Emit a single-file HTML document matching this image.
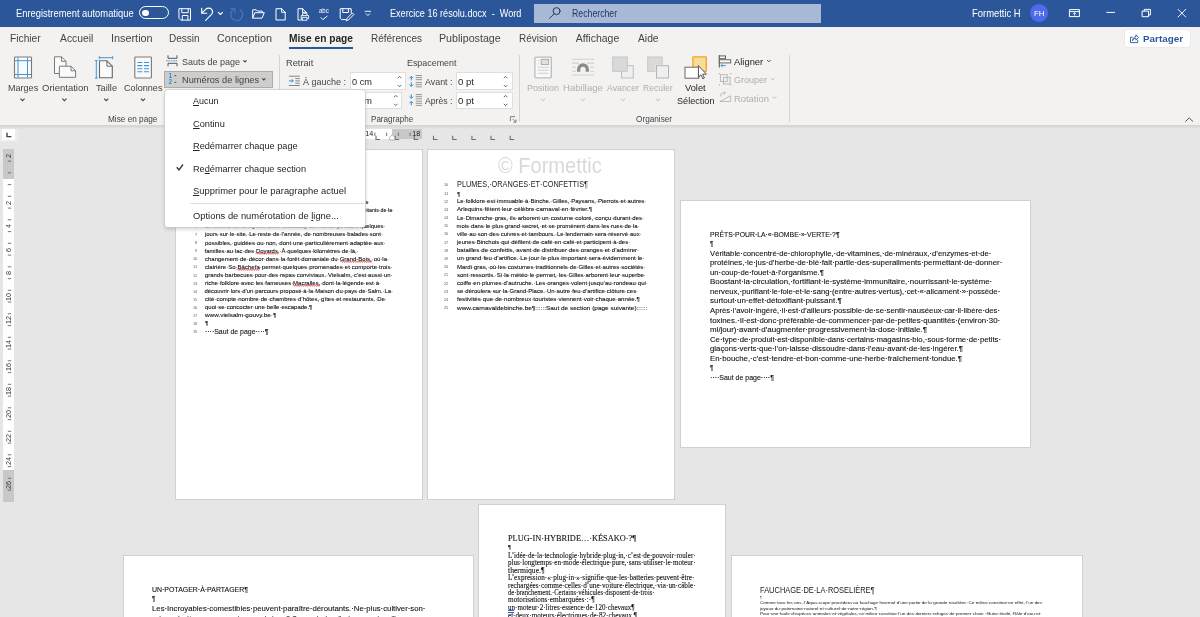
<!DOCTYPE html>
<html lang="fr"><head><meta charset="utf-8"><title>Exercice 16 résolu.docx - Word</title>
<style>
html,body{margin:0;padding:0;}
body{width:1200px;height:617px;overflow:hidden;background:#e6e6e6;font-family:"Liberation Sans",sans-serif;position:relative;}
.t{position:absolute;white-space:pre;line-height:1;transform-origin:0 0;}
.abs{position:absolute;}
#titlebar{left:0;top:0;width:1200px;height:27px;background:#2b579a;}
#tabs{left:0;top:27px;width:1200px;height:25px;background:#f3f2f1;}
#ribbon{left:0;top:52px;width:1200px;height:72.5px;background:#f3f2f1;}
#ribshadow{left:0;top:124.5px;width:1200px;height:4px;background:linear-gradient(#d2d2d2,#e6e6e6);}
.sep{position:absolute;width:1px;background:#d6d4d2;top:55px;height:67px;}
.page{position:absolute;background:#fff;outline:1px solid #d0d0d0;overflow:hidden;}
.inp{position:absolute;background:#fff;border:1px solid #e1dfdd;box-sizing:border-box;}
u{text-decoration:underline;text-underline-offset:0.8px;text-decoration-thickness:0.7px;}
.wv{}
svg{position:absolute;overflow:visible;}
#menu{left:164.6px;top:89.6px;width:200.4px;height:137.6px;background:#fff;border-radius:3px;box-shadow:0 0 0 0.7px #cfcdcb,0 2px 4px rgba(0,0,0,.2);}
</style></head><body>
<div id="docarea" style="will-change:transform">
<!--ICONS_DOC-->
<div class="page" id="p1" style="left:176px;top:149.7px;width:245.6px;height:349px;"><span class="t" style="left:28.5px;top:33.0px;font-size:7.8px;color:#111;transform:scaleX(0.895);-webkit-text-stroke:0.1px #111;">VIELSALM,·SORCIÈRES·ET·MYRTILLES¶</span>
<span class="t" style="left:18.9px;top:35.9px;font-size:3.6px;color:#555;transform:scaleX(1.050);">1</span>
<span class="t" style="left:28.5px;top:42.4px;font-size:5.9px;color:#111;transform:scaleX(1.103);-webkit-text-stroke:0.1px #111;">¶</span>
<span class="t" style="left:18.9px;top:44.1px;font-size:3.6px;color:#555;transform:scaleX(1.050);">2</span>
<span class="t" style="left:28.5px;top:50.6px;font-size:5.9px;color:#111;transform:scaleX(0.746);-webkit-text-stroke:0.1px #111;">Chaque·année,·le·20·juillet,·Vielsalm·fête·les·myrtilles·et·le·sabbat·des·Macralles·a·</span>
<span class="t" style="left:18.9px;top:52.1px;font-size:3.6px;color:#555;transform:scaleX(1.050);">3</span>
<span class="t" style="left:28.5px;top:58.6px;font-size:5.9px;color:#111;transform:scaleX(0.882);-webkit-text-stroke:0.1px #111;">lieu·la·veille·au·soir.·Des·milliers·de·visiteurs·se·mêlent·alors·aux·habitants·de·la·</span>
<span class="t" style="left:18.9px;top:60.2px;font-size:3.6px;color:#555;transform:scaleX(1.050);">4</span>
<span class="t" style="left:28.5px;top:66.7px;font-size:5.9px;color:#111;transform:scaleX(0.729);-webkit-text-stroke:0.1px #111;">commune·pour·assister·au·spectacle·en·wallon·puis·au·cortège.¶</span>
<span class="t" style="left:18.9px;top:68.2px;font-size:3.6px;color:#555;transform:scaleX(1.050);">5</span>
<span class="t" style="left:28.5px;top:74.8px;font-size:5.9px;color:#111;transform:scaleX(0.974);-webkit-text-stroke:0.1px #111;">Le·festival·de·la·myrtille·attire·beaucoup·de·monde·pendant·quelques·</span>
<span class="t" style="left:18.9px;top:76.3px;font-size:3.6px;color:#555;transform:scaleX(1.050);">6</span>
<span class="t" style="left:28.5px;top:82.8px;font-size:5.9px;color:#111;transform:scaleX(1.003);-webkit-text-stroke:0.1px #111;">jours·sur·le·site.·Le·reste·de·l’année,·de·nombreuses·balades·sont·</span>
<span class="t" style="left:18.9px;top:84.4px;font-size:3.6px;color:#555;transform:scaleX(1.050);">7</span>
<span class="t" style="left:28.5px;top:91.0px;font-size:5.9px;color:#111;transform:scaleX(1.023);-webkit-text-stroke:0.1px #111;">possibles,·guidées·ou·non,·dont·une·particulièrement·adaptée·aux·</span>
<span class="t" style="left:18.9px;top:92.5px;font-size:3.6px;color:#555;transform:scaleX(1.050);">8</span>
<span class="t" style="left:28.5px;top:99.0px;font-size:5.9px;color:#111;-webkit-text-stroke:0.1px #111;">familles·au·lac·des·<span class="wv">Doyards</span>.·À·quelques·kilomètres·de·là,·</span>
<span class="t" style="left:18.9px;top:100.6px;font-size:3.6px;color:#555;transform:scaleX(1.050);">9</span>
<span class="t" style="left:28.5px;top:107.1px;font-size:5.9px;color:#111;transform:scaleX(1.018);-webkit-text-stroke:0.1px #111;">changement·de·décor·dans·la·forêt·domaniale·du·<span class="wv">Grand-Bois</span>,·où·la·</span>
<span class="t" style="left:16.8px;top:108.6px;font-size:3.6px;color:#555;transform:scaleX(1.050);">10</span>
<span class="t" style="left:28.5px;top:115.2px;font-size:5.9px;color:#111;transform:scaleX(1.026);-webkit-text-stroke:0.1px #111;">clairière·So·<span class="wv">Bâchefa</span>·permet·quelques·promenades·et·comporte·trois·</span>
<span class="t" style="left:16.8px;top:116.7px;font-size:3.6px;color:#555;transform:scaleX(1.125);">11</span>
<span class="t" style="left:28.5px;top:123.2px;font-size:5.9px;color:#111;transform:scaleX(1.005);-webkit-text-stroke:0.1px #111;">grands·barbecues·pour·des·repas·conviviaux.·Vielsalm,·c’est·aussi·un·</span>
<span class="t" style="left:16.8px;top:124.9px;font-size:3.6px;color:#555;transform:scaleX(1.050);">12</span>
<span class="t" style="left:28.5px;top:131.4px;font-size:5.9px;color:#111;transform:scaleX(1.012);-webkit-text-stroke:0.1px #111;">riche·folklore·avec·les·fameuses·<span class="wv">Macralles</span>,·dont·la·légende·est·à·</span>
<span class="t" style="left:16.8px;top:132.9px;font-size:3.6px;color:#555;transform:scaleX(1.050);">13</span>
<span class="t" style="left:28.5px;top:139.4px;font-size:5.9px;color:#111;-webkit-text-stroke:0.1px #111;">découvrir·lors·d’un·parcours·proposé·à·la·Maison·du·pays·de·Salm.·La·</span>
<span class="t" style="left:16.8px;top:141.0px;font-size:3.6px;color:#555;transform:scaleX(1.050);">14</span>
<span class="t" style="left:28.5px;top:147.5px;font-size:5.9px;color:#111;transform:scaleX(1.025);-webkit-text-stroke:0.1px #111;">cité·compte·nombre·de·chambres·d’hôtes,·gîtes·et·restaurants.·De·</span>
<span class="t" style="left:16.8px;top:149.0px;font-size:3.6px;color:#555;transform:scaleX(1.050);">15</span>
<span class="t" style="left:28.5px;top:155.6px;font-size:5.9px;color:#111;transform:scaleX(1.019);-webkit-text-stroke:0.1px #111;">quoi·se·concocter·une·belle·escapade.¶</span>
<span class="t" style="left:16.8px;top:157.1px;font-size:3.6px;color:#555;transform:scaleX(1.050);">16</span>
<span class="t" style="left:28.5px;top:163.6px;font-size:5.9px;color:#111;transform:scaleX(1.082);-webkit-text-stroke:0.1px #111;">www.vielsalm-gouvy.be·¶</span>
<span class="t" style="left:16.8px;top:165.2px;font-size:3.6px;color:#555;transform:scaleX(1.050);">17</span>
<span class="t" style="left:28.5px;top:171.8px;font-size:5.9px;color:#111;transform:scaleX(1.103);-webkit-text-stroke:0.1px #111;">¶</span>
<span class="t" style="left:16.8px;top:173.3px;font-size:3.6px;color:#555;transform:scaleX(1.050);">18</span>
<span class="t" style="left:28.5px;top:178.3px;font-size:7.2px;color:#111;transform:scaleX(0.965);-webkit-text-stroke:0.1px #111;">····Saut de page····¶</span>
<span class="t" style="left:16.8px;top:181.4px;font-size:3.6px;color:#555;transform:scaleX(1.050);">19</span><svg style="left:0;top:0;" width="246" height="349" fill="none" stroke="#e23b3b" stroke-width="0.7"><path d="M79.5 103.5L80.6 102.7L81.7 104.3L82.8 102.7L83.9 104.3L85.0 102.7L86.1 104.3L87.2 102.7L88.3 104.3L89.4 102.7L90.5 104.3L91.6 102.7L92.7 104.3L93.8 102.7L94.9 104.3L96.0 102.7L97.1 104.3L98.2 102.7L99.3 104.3L100.4 102.7L101.5 104.3L102.6 102.7 M164.3 111.7L165.4 110.9L166.5 112.5L167.6 110.9L168.7 112.5L169.8 110.9L170.9 112.5L172.0 110.9L173.1 112.5L174.2 110.9L175.3 112.5L176.4 110.9L177.5 112.5L178.6 110.9L179.7 112.5L180.8 110.9L181.9 112.5L183.0 110.9L184.1 112.5L185.2 110.9L186.3 112.5L187.4 110.9L188.5 112.5L189.6 110.9L190.7 112.5L191.8 110.9L192.9 112.5L194.0 110.9L195.1 112.5L196.2 110.9 M60.6 119.7L61.7 118.9L62.8 120.5L63.9 118.9L65.0 120.5L66.1 118.9L67.2 120.5L68.3 118.9L69.4 120.5L70.5 118.9L71.6 120.5L72.7 118.9L73.8 120.5L74.9 118.9L76.0 120.5L77.1 118.9L78.2 120.5L79.3 118.9L80.4 120.5L81.5 118.9L82.6 120.5L83.7 118.9 M116.6 135.6L117.7 134.8L118.8 136.4L119.9 134.8L121.0 136.4L122.1 134.8L123.2 136.4L124.3 134.8L125.4 136.4L126.5 134.8L127.6 136.4L128.7 134.8L129.8 136.4L130.9 134.8L132.0 136.4L133.1 134.8L134.2 136.4L135.3 134.8L136.4 136.4L137.5 134.8L138.6 136.4L139.7 134.8L140.8 136.4L141.9 134.8L143.0 136.4L144.1 134.8"/></svg></div>
<div class="page" id="p2" style="left:428px;top:149.7px;width:245.9px;height:349px;"><span class="t" style="left:69.8px;top:6.2px;font-size:21.5px;color:#d9d9d9;transform:scaleX(0.931);">© Formettic</span>
<span class="t" style="left:28.6px;top:31.2px;font-size:8.2px;color:#222;transform:scaleX(0.895);">PLUMES,·ORANGES·ET·CONFETTIS¶</span>
<span class="t" style="left:16.3px;top:34.1px;font-size:3.6px;color:#555;transform:scaleX(1.050);">10</span>
<span class="t" style="left:28.6px;top:42.0px;font-size:5.9px;color:#111;transform:scaleX(1.072);-webkit-text-stroke:0.1px #111;">¶</span>
<span class="t" style="left:16.3px;top:43.6px;font-size:3.6px;color:#555;transform:scaleX(1.125);">11</span>
<span class="t" style="left:28.6px;top:49.5px;font-size:5.9px;color:#111;transform:scaleX(1.020);-webkit-text-stroke:0.1px #111;">Le·folklore·est·immuable·à·Binche.·Gilles,·Paysans,·Pierrots·et·autres·</span>
<span class="t" style="left:16.3px;top:51.1px;font-size:3.6px;color:#555;transform:scaleX(1.050);">12</span>
<span class="t" style="left:28.6px;top:57.8px;font-size:5.9px;color:#111;transform:scaleX(1.040);-webkit-text-stroke:0.1px #111;">Arlequins·fêtent·leur·célèbre·carnaval·en·février.¶</span>
<span class="t" style="left:16.3px;top:59.3px;font-size:3.6px;color:#555;transform:scaleX(1.050);">13</span>
<span class="t" style="left:28.6px;top:65.9px;font-size:5.9px;color:#111;transform:scaleX(1.018);-webkit-text-stroke:0.1px #111;">Le·Dimanche·gras,·ils·arborent·un·costume·coloré,·conçu·durant·des·</span>
<span class="t" style="left:16.3px;top:67.5px;font-size:3.6px;color:#555;transform:scaleX(1.050);">14</span>
<span class="t" style="left:28.6px;top:74.1px;font-size:5.9px;color:#111;-webkit-text-stroke:0.1px #111;">mois·dans·le·plus·grand·secret,·et·se·promènent·dans·les·rues·de·la·</span>
<span class="t" style="left:16.3px;top:75.6px;font-size:3.6px;color:#555;transform:scaleX(1.050);">15</span>
<span class="t" style="left:28.6px;top:82.3px;font-size:5.9px;color:#111;transform:scaleX(1.007);-webkit-text-stroke:0.1px #111;">ville·au·son·des·cuivres·et·tambours.·Le·lendemain·sera·réservé·aux·</span>
<span class="t" style="left:16.3px;top:83.8px;font-size:3.6px;color:#555;transform:scaleX(1.050);">16</span>
<span class="t" style="left:28.6px;top:90.4px;font-size:5.9px;color:#111;transform:scaleX(1.017);-webkit-text-stroke:0.1px #111;">jeunes·Binchois·qui·défilent·de·café·en·café·et·participent·à·des·</span>
<span class="t" style="left:16.3px;top:92.1px;font-size:3.6px;color:#555;transform:scaleX(1.050);">17</span>
<span class="t" style="left:28.6px;top:98.7px;font-size:5.9px;color:#111;transform:scaleX(1.030);-webkit-text-stroke:0.1px #111;">batailles·de·confettis,·avant·de·distribuer·des·oranges·et·d’admirer·</span>
<span class="t" style="left:16.3px;top:100.2px;font-size:3.6px;color:#555;transform:scaleX(1.050);">18</span>
<span class="t" style="left:28.6px;top:106.8px;font-size:5.9px;color:#111;transform:scaleX(1.034);-webkit-text-stroke:0.1px #111;">un·grand·feu·d’artifice.·Le·jour·le·plus·important·sera·évidemment·le·</span>
<span class="t" style="left:16.3px;top:108.4px;font-size:3.6px;color:#555;transform:scaleX(1.050);">19</span>
<span class="t" style="left:28.6px;top:115.0px;font-size:5.9px;color:#111;transform:scaleX(1.020);-webkit-text-stroke:0.1px #111;">Mardi·gras,·où·les·costumes·traditionnels·de·Gilles·et·autres·sociétés·</span>
<span class="t" style="left:16.3px;top:116.5px;font-size:3.6px;color:#555;transform:scaleX(1.050);">20</span>
<span class="t" style="left:28.6px;top:123.2px;font-size:5.9px;color:#111;transform:scaleX(1.023);-webkit-text-stroke:0.1px #111;">sont·ressortis.·Si·la·météo·le·permet,·les·Gilles·arborent·leur·superbe·</span>
<span class="t" style="left:16.3px;top:124.7px;font-size:3.6px;color:#555;transform:scaleX(1.050);">21</span>
<span class="t" style="left:28.6px;top:131.3px;font-size:5.9px;color:#111;transform:scaleX(1.025);-webkit-text-stroke:0.1px #111;">coiffe·en·plumes·d’autruche.·Les·oranges·volent·jusqu’au·rondeau·qui·</span>
<span class="t" style="left:16.3px;top:132.9px;font-size:3.6px;color:#555;transform:scaleX(1.050);">22</span>
<span class="t" style="left:28.6px;top:139.6px;font-size:5.9px;color:#111;transform:scaleX(1.017);-webkit-text-stroke:0.1px #111;">se·déroulera·sur·la·Grand-Place.·Un·autre·feu·d’artifice·clôture·ces·</span>
<span class="t" style="left:16.3px;top:141.1px;font-size:3.6px;color:#555;transform:scaleX(1.050);">23</span>
<span class="t" style="left:28.6px;top:147.7px;font-size:5.9px;color:#111;transform:scaleX(1.040);-webkit-text-stroke:0.1px #111;">festivités·que·de·nombreux·touristes·viennent·voir·chaque·année.¶</span>
<span class="t" style="left:16.3px;top:149.3px;font-size:3.6px;color:#555;transform:scaleX(1.050);">24</span>
<span class="t" style="left:28.6px;top:155.9px;font-size:5.9px;color:#111;transform:scaleX(1.093);-webkit-text-stroke:0.1px #111;">www.carnavaldebinche.be¶::::::Saut de section (page suivante)::::::</span>
<span class="t" style="left:16.3px;top:157.4px;font-size:3.6px;color:#555;transform:scaleX(1.050);">25</span></div>
<div class="page" id="p3" style="left:681px;top:201.3px;width:349.2px;height:245.9px;"><span class="t" style="left:29.2px;top:29.3px;font-size:7.4px;color:#111;transform:scaleX(0.927);-webkit-text-stroke:0.1px #111;">PRÊTS·POUR·LA·«·BOMBE·»·VERTE·?¶</span>
<span class="t" style="left:29.2px;top:38.9px;font-size:7.4px;color:#111;transform:scaleX(0.828);-webkit-text-stroke:0.1px #111;">¶</span>
<span class="t" style="left:29.2px;top:48.4px;font-size:7.4px;color:#111;transform:scaleX(1.041);-webkit-text-stroke:0.1px #111;">Véritable·concentré·de·chlorophylle,·de·vitamines,·de·minéraux,·d’enzymes·et·de·</span>
<span class="t" style="left:29.2px;top:58.0px;font-size:7.4px;color:#111;transform:scaleX(1.062);-webkit-text-stroke:0.1px #111;">protéines,·le·jus·d’herbe·de·blé·fait·partie·des·superaliments·permettant·de·donner·</span>
<span class="t" style="left:29.2px;top:67.5px;font-size:7.4px;color:#111;transform:scaleX(1.043);-webkit-text-stroke:0.1px #111;">un·coup·de·fouet·à·l’organisme.¶</span>
<span class="t" style="left:29.2px;top:77.1px;font-size:7.4px;color:#111;transform:scaleX(1.067);-webkit-text-stroke:0.1px #111;">Boostant·la·circulation,·fortifiant·le·système·immunitaire,·nourrissant·le·système·</span>
<span class="t" style="left:29.2px;top:86.6px;font-size:7.4px;color:#111;transform:scaleX(1.039);-webkit-text-stroke:0.1px #111;">nerveux,·purifiant·le·foie·et·le·sang·(entre·autres·vertus),·cet·«·alicament·»·possède·</span>
<span class="t" style="left:29.2px;top:96.2px;font-size:7.4px;color:#111;transform:scaleX(1.078);-webkit-text-stroke:0.1px #111;">surtout·un·effet·détoxifiant·puissant.¶</span>
<span class="t" style="left:29.2px;top:105.7px;font-size:7.4px;color:#111;transform:scaleX(1.046);-webkit-text-stroke:0.1px #111;">Après·l’avoir·ingéré,·il·est·d’ailleurs·possible·de·se·sentir·nauséeux·car·il·libère·des·</span>
<span class="t" style="left:29.2px;top:115.3px;font-size:7.4px;color:#111;transform:scaleX(1.064);-webkit-text-stroke:0.1px #111;">toxines.·Il·est·donc·préférable·de·commencer·par·de·petites·quantités·(environ·30·</span>
<span class="t" style="left:29.2px;top:124.8px;font-size:7.4px;color:#111;transform:scaleX(1.074);-webkit-text-stroke:0.1px #111;">ml/jour)·avant·d’augmenter·progressivement·la·dose·initiale.¶</span>
<span class="t" style="left:29.2px;top:134.4px;font-size:7.4px;color:#111;transform:scaleX(1.048);-webkit-text-stroke:0.1px #111;">Ce·type·de·produit·est·disponible·dans·certains·magasins·bio,·sous·forme·de·petits·</span>
<span class="t" style="left:29.2px;top:143.9px;font-size:7.4px;color:#111;transform:scaleX(1.057);-webkit-text-stroke:0.1px #111;">glaçons·verts·que·l’on·laisse·dissoudre·dans·l’eau·avant·de·les·ingérer.¶</span>
<span class="t" style="left:29.2px;top:153.5px;font-size:7.4px;color:#111;transform:scaleX(1.060);-webkit-text-stroke:0.1px #111;">En·bouche,·c’est·tendre·et·bon·comme·une·herbe·fraîchement·tondue.¶</span>
<span class="t" style="left:29.2px;top:163.0px;font-size:7.4px;color:#111;transform:scaleX(0.828);-webkit-text-stroke:0.1px #111;">¶</span>
<span class="t" style="left:29.2px;top:172.6px;font-size:7.4px;color:#111;transform:scaleX(0.945);-webkit-text-stroke:0.1px #111;">····Saut de page····¶</span></div>
<div class="page" id="p4" style="left:123.9px;top:556.4px;width:349px;height:80px;"><span class="t" style="left:28.6px;top:29.5px;font-size:7.4px;color:#111;transform:scaleX(0.941);-webkit-text-stroke:0.1px #111;">UN·POTAGER·À·PARTAGER¶</span>
<span class="t" style="left:28.6px;top:38.7px;font-size:7.4px;color:#111;transform:scaleX(0.828);-webkit-text-stroke:0.1px #111;">¶</span>
<span class="t" style="left:28.6px;top:49.0px;font-size:7.4px;color:#111;transform:scaleX(1.050);-webkit-text-stroke:0.1px #111;">Les·Incroyables·comestibles·peuvent·paraître·déroutants.·Ne·plus·cultiver·son·</span>
<span class="t" style="left:28.6px;top:58.6px;font-size:7.4px;color:#111;transform:scaleX(0.869);-webkit-text-stroke:0.1px #111;">potager·derrière·ses·murs·mais·au·vu·de·tous·?·Que·quelqu’un·d’autre·que·soi·cueille·</span></div>
<div class="page" id="p5" style="left:479.4px;top:505.1px;width:245.6px;height:130px;"><span class="t" style="left:29.1px;top:30.0px;font-size:8.0px;color:#111;font-family:'Liberation Serif', serif;transform:scaleX(1.039);-webkit-text-stroke:0.12px #111;-webkit-text-stroke:0.1px #111;">PLUG-IN·HYBRIDE…·KÉSAKO·?¶</span>
<span class="t" style="left:29.1px;top:39.2px;font-size:7px;color:#111;font-family:'Liberation Serif', serif;transform:scaleX(0.946);-webkit-text-stroke:0.12px #111;-webkit-text-stroke:0.1px #111;">¶</span>
<span class="t" style="left:29.1px;top:46.5px;font-size:7.6px;color:#111;font-family:'Liberation Serif', serif;transform:scaleX(0.925);-webkit-text-stroke:0.12px #111;-webkit-text-stroke:0.1px #111;">L’idée·de·la·technologie·hybride·plug-in,·c’est·de·pouvoir·rouler·</span>
<span class="t" style="left:29.1px;top:54.0px;font-size:7.6px;color:#111;font-family:'Liberation Serif', serif;transform:scaleX(0.937);-webkit-text-stroke:0.12px #111;-webkit-text-stroke:0.1px #111;">plus·longtemps·en·mode·électrique·pure,·sans·utiliser·le·moteur·</span>
<span class="t" style="left:29.1px;top:61.5px;font-size:7.6px;color:#111;font-family:'Liberation Serif', serif;transform:scaleX(1.010);-webkit-text-stroke:0.12px #111;-webkit-text-stroke:0.1px #111;">thermique.¶</span>
<span class="t" style="left:29.1px;top:69.0px;font-size:7.6px;color:#111;font-family:'Liberation Serif', serif;transform:scaleX(0.946);-webkit-text-stroke:0.12px #111;-webkit-text-stroke:0.1px #111;">L’expression·«·plug-in·»·signifie·que·les·batteries·peuvent·être·</span>
<span class="t" style="left:29.1px;top:76.6px;font-size:7.6px;color:#111;font-family:'Liberation Serif', serif;transform:scaleX(0.946);-webkit-text-stroke:0.12px #111;-webkit-text-stroke:0.1px #111;">rechargées·comme·celles·d’une·voiture·électrique,·via·un·câble·</span>
<span class="t" style="left:29.1px;top:83.9px;font-size:7.6px;color:#111;font-family:'Liberation Serif', serif;transform:scaleX(0.865);-webkit-text-stroke:0.12px #111;-webkit-text-stroke:0.1px #111;">de·branchement.·Certains·véhicules·disposent·de·trois·</span>
<span class="t" style="left:29.1px;top:91.2px;font-size:7.6px;color:#111;font-family:'Liberation Serif', serif;transform:scaleX(0.953);-webkit-text-stroke:0.12px #111;-webkit-text-stroke:0.1px #111;">motorisations·embarquées·:·¶</span>
<span class="t" style="left:29.1px;top:99.1px;font-size:7.6px;color:#111;font-family:'Liberation Serif', serif;transform:scaleX(0.928);-webkit-text-stroke:0.12px #111;-webkit-text-stroke:0.1px #111;">un·moteur·2·litres·essence·de·120·chevaux¶</span>
<span class="t" style="left:29.1px;top:106.7px;font-size:7.6px;color:#111;font-family:'Liberation Serif', serif;transform:scaleX(0.934);-webkit-text-stroke:0.12px #111;-webkit-text-stroke:0.1px #111;">et·deux·moteurs·électriques·de·82·chevaux.¶</span><div class="abs" style="left:29.1px;top:105.1px;width:5.6px;height:0.6px;border-top:0.6px solid #2f62d4;border-bottom:0.6px solid #2f62d4;"></div></div>
<div class="page" id="p6" style="left:732px;top:556.3px;width:349.6px;height:80px;"><span class="t" style="left:28.4px;top:29.8px;font-size:8.4px;color:#1a1a1a;transform:scaleX(0.890);">FAUCHAGE·DE·LA·ROSELIÈRE¶</span>
<span class="t" style="left:28.4px;top:40.4px;font-size:3.2px;color:#111;transform:scaleX(0.931);">¶</span>
<span class="t" style="left:28.4px;top:45.9px;font-size:3.7px;color:#111;transform:scaleX(1.213);">Comme·tous·les·ans,·l’Aqua-scope·procédera·au·fauchage·hivernal·d’une·partie·de·la·grande·roselière.·Ce·milieu·constitue·en·effet,·l’un·des·</span>
<span class="t" style="left:28.4px;top:51.7px;font-size:3.7px;color:#111;transform:scaleX(1.243);">joyaux·du·patrimoine·naturel·et·culturel·de·notre·région.¶</span>
<span class="t" style="left:28.4px;top:57.2px;font-size:3.7px;color:#111;transform:scaleX(1.215);">Pour·une·foule·d’espèces·animales·et·végétales,·ce·milieu·constitue·l’un·des·derniers·refuges·de·premier·choix·:·Butor·étoilé,·Râle·d’eau·et·</span></div>
<div class="abs" style="left:0;top:126.5px;width:17.5px;height:15.5px;background:#ececec;"></div>
<div class="abs" style="left:2.2px;top:128px;width:13px;height:12.2px;background:#fff;"></div>
<div class="abs" style="left:3.2px;top:149px;width:10.6px;height:352.8px;background:#fff;"></div>
<div class="abs" style="left:3.2px;top:149px;width:10.6px;height:30.3px;background:#c8c8c8;"></div>
<div class="abs" style="left:3.2px;top:470.4px;width:10.6px;height:31.4px;background:#c8c8c8;"></div>
<div class="abs" style="left:175.7px;top:129px;width:246.5px;height:9.7px;background:#fff;"></div>
<div class="abs" style="left:175.7px;top:129px;width:29.4px;height:9.7px;background:#c8c8c8;"></div>
<div class="abs" style="left:392.4px;top:129px;width:29.8px;height:9.7px;background:#c8c8c8;"></div>
<svg style="left:0;top:120px;" width="1200" height="400" viewBox="0 120 1200 400" fill="none" stroke="#555" stroke-width="1"><path d="M7 132.8v3.8h4.4" stroke="#444" stroke-width="1.4"/><path d="M7.8 161.1h3.4 M7.8 172.8h3.4 M7.8 184.6h3.4 M7.8 196.3h3.4 M7.8 208.1h3.4 M7.8 219.8h3.4 M7.8 231.6h3.4 M7.8 243.3h3.4 M7.8 255.1h3.4 M7.8 266.8h3.4 M7.8 278.6h3.4 M7.8 290.3h3.4 M7.8 302.1h3.4 M7.8 313.8h3.4 M7.8 325.6h3.4 M7.8 337.3h3.4 M7.8 349.1h3.4 M7.8 360.8h3.4 M7.8 372.6h3.4 M7.8 384.3h3.4 M7.8 396.1h3.4 M7.8 407.8h3.4 M7.8 419.6h3.4 M7.8 431.3h3.4 M7.8 443.1h3.4 M7.8 454.8h3.4 M7.8 466.6h3.4 M7.8 478.3h3.4 M7.8 490.1h3.4" stroke="#666" stroke-width="0.9"/><path d="M186.9 132.6v3.4 M198.6 132.6v3.4 M210.4 132.6v3.4 M222.1 132.6v3.4 M233.9 132.6v3.4 M245.6 132.6v3.4 M257.4 132.6v3.4 M269.1 132.6v3.4 M280.9 132.6v3.4 M292.6 132.6v3.4 M304.4 132.6v3.4 M316.1 132.6v3.4 M327.9 132.6v3.4 M339.6 132.6v3.4 M351.4 132.6v3.4 M363.1 132.6v3.4 M374.9 132.6v3.4 M386.6 132.6v3.4 M398.4 132.6v3.4 M410.1 132.6v3.4" stroke="#666" stroke-width="0.9"/><path d="M376.0 135.8v3.7h4 M395.2 135.8v3.7h4 M414.3 135.8v3.7h4 M433.5 135.8v3.7h4 M452.7 135.8v3.7h4 M471.9 135.8v3.7h4 M491.0 135.8v3.7h4 M510.2 135.8v3.7h4" stroke="#6e6e6e" stroke-width="1.1"/><path d="M389.6 140v-2.6l2.6-2.8 2.6 2.8v2.6z" fill="#fff" stroke="#999" stroke-width="0.7"/></svg>
<span class="t m" style="left:8.6px;top:155.5px;font-size:7.2px;color:#333;transform:translate(-50%,-50%) rotate(-90deg);transform-origin:50% 50%;">2</span>
<span class="t m" style="left:8.6px;top:202.5px;font-size:7.2px;color:#333;transform:translate(-50%,-50%) rotate(-90deg);transform-origin:50% 50%;">2</span>
<span class="t m" style="left:8.6px;top:226.0px;font-size:7.2px;color:#333;transform:translate(-50%,-50%) rotate(-90deg);transform-origin:50% 50%;">4</span>
<span class="t m" style="left:8.6px;top:249.5px;font-size:7.2px;color:#333;transform:translate(-50%,-50%) rotate(-90deg);transform-origin:50% 50%;">6</span>
<span class="t m" style="left:8.6px;top:273.0px;font-size:7.2px;color:#333;transform:translate(-50%,-50%) rotate(-90deg);transform-origin:50% 50%;">8</span>
<span class="t m" style="left:8.6px;top:296.5px;font-size:7.2px;color:#333;transform:translate(-50%,-50%) rotate(-90deg);transform-origin:50% 50%;">10</span>
<span class="t m" style="left:8.6px;top:320.0px;font-size:7.2px;color:#333;transform:translate(-50%,-50%) rotate(-90deg);transform-origin:50% 50%;">12</span>
<span class="t m" style="left:8.6px;top:343.5px;font-size:7.2px;color:#333;transform:translate(-50%,-50%) rotate(-90deg);transform-origin:50% 50%;">14</span>
<span class="t m" style="left:8.6px;top:367.0px;font-size:7.2px;color:#333;transform:translate(-50%,-50%) rotate(-90deg);transform-origin:50% 50%;">16</span>
<span class="t m" style="left:8.6px;top:390.5px;font-size:7.2px;color:#333;transform:translate(-50%,-50%) rotate(-90deg);transform-origin:50% 50%;">18</span>
<span class="t m" style="left:8.6px;top:414.0px;font-size:7.2px;color:#333;transform:translate(-50%,-50%) rotate(-90deg);transform-origin:50% 50%;">20</span>
<span class="t m" style="left:8.6px;top:437.5px;font-size:7.2px;color:#333;transform:translate(-50%,-50%) rotate(-90deg);transform-origin:50% 50%;">22</span>
<span class="t m" style="left:8.6px;top:461.0px;font-size:7.2px;color:#333;transform:translate(-50%,-50%) rotate(-90deg);transform-origin:50% 50%;">24</span>
<span class="t m" style="left:8.6px;top:484.5px;font-size:7.2px;color:#333;transform:translate(-50%,-50%) rotate(-90deg);transform-origin:50% 50%;">26</span>
<span class="t m" style="left:181.3px;top:134.2px;font-size:7.2px;color:#222;transform:translate(-50%,-50%);transform-origin:50% 50%;">2</span>
<span class="t m" style="left:228.3px;top:134.2px;font-size:7.2px;color:#222;transform:translate(-50%,-50%);transform-origin:50% 50%;">2</span>
<span class="t m" style="left:251.8px;top:134.2px;font-size:7.2px;color:#222;transform:translate(-50%,-50%);transform-origin:50% 50%;">4</span>
<span class="t m" style="left:275.3px;top:134.2px;font-size:7.2px;color:#222;transform:translate(-50%,-50%);transform-origin:50% 50%;">6</span>
<span class="t m" style="left:298.8px;top:134.2px;font-size:7.2px;color:#222;transform:translate(-50%,-50%);transform-origin:50% 50%;">8</span>
<span class="t m" style="left:322.3px;top:134.2px;font-size:7.2px;color:#222;transform:translate(-50%,-50%);transform-origin:50% 50%;">10</span>
<span class="t m" style="left:345.8px;top:134.2px;font-size:7.2px;color:#222;transform:translate(-50%,-50%);transform-origin:50% 50%;">12</span>
<span class="t m" style="left:369.3px;top:134.2px;font-size:7.2px;color:#222;transform:translate(-50%,-50%);transform-origin:50% 50%;">14</span>
<span class="t m" style="left:416.3px;top:134.2px;font-size:7.2px;color:#222;transform:translate(-50%,-50%);transform-origin:50% 50%;">18</span>
</div>
<div class="abs" id="titlebar"></div>
<div class="abs" id="tabs"></div>
<div class="abs" id="ribbon"></div>
<div class="abs" id="ribshadow"></div>
<!-- title bar widgets -->
<div class="abs" style="left:139px;top:6.3px;width:28px;height:10.6px;border:1px solid #fff;border-radius:7px;"></div>
<div class="abs" style="left:142.4px;top:9.6px;width:6.2px;height:6.2px;border-radius:50%;background:#fff;"></div>
<div class="abs" style="left:534px;top:4px;width:287px;height:19px;background:#a8b9d6;"></div>
<div class="abs" style="left:1029.7px;top:4.3px;width:18px;height:18px;border-radius:50%;background:#4f6bed;"></div>
<svg style="left:0;top:0;" width="1200" height="27" viewBox="0 0 1200 27" fill="none" stroke="#fff" stroke-width="1" stroke-linecap="round" stroke-linejoin="round">
 <!-- save -->
 <path d="M179.3 8.7h11.2v11.4h-9.7l-1.5-1.5z M181.8 8.7v4h6.4v-4 M182.3 20.1v-4.6h5.6v4.6"/>
 <!-- undo -->
 <path d="M201.7 8.2V13.2H206.8 M202 12.9L205.7 9.3C207.3 7.9 210.1 7.7 211.6 9.4C213 11.1 212.7 13.2 211.2 14.7L205.6 20.3" stroke-width="1.15"/>
 <path d="M218.3 12.3l2.1 2.2 2.1-2.2" stroke-width="1.1"/>
 <!-- redo dimmed -->
 <g stroke="#4f7cbc" stroke-width="1.1"><path d="M240.3 9.7A6 6 0 1 1 232.6 10.2 M230.7 8.7h4.2v3.9"/></g>
 <!-- folder -->
 <path d="M252.7 17.8v-8h3.6l1.2 1.3h4.8v1.6 M252.7 17.8l2.2-5.1h9.4l-2.2 5.1z"/>
 <!-- new doc -->
 <path d="M276.4 8.7h5.2l3.6 3.6v7.7h-8.8z M281.6 8.7v3.6h3.6"/>
 <!-- print preview -->
 <path d="M302.5 20h-4.5v-11.3h4.6l3.6 3.6v1 M302.6 8.700000000000001v3.6h3.6"/>
 <path d="M302 18.600000000000001h-0.8v-3h7.4v3h-0.8 M302.6 15.4v-2.2h4.400000000000001v2.2 M302.6 17.4h4.400000000000001v2.8h-4.400000000000001z" stroke-width="0.9"/>
 <!-- abc check -->
 <path d="M321 17.7l1.9 1.9 4.2-3.4" />
 <!-- save-as -->
 <path d="M345.6 19.6h-4l-1.4-1.4v-9.5h11v4 M342.8 8.7v3.8h5.6v-3.8"/>
 <path d="M352.6 13.2l1.3 1.3-5.5 5.5-2.2 0.8 0.8-2.2z" fill="#2b579a"/>
 <!-- customize -->
 <path d="M365.2 11.3h5.4 M366 13.7l1.9 1.9 1.9-1.9" stroke-width="0.9"/>
 <!-- search magnifier -->
 <g stroke="#1f3864"><circle cx="556.6" cy="11.1" r="3.5"/><path d="M554.2 13.7l-4.6 4.6"/></g>
 <!-- ribbon display -->
 <path d="M1069.8 9.6h9.6v7h-9.6z M1069.8 11.6h9.6" />
 <path d="M1074.6 15.4v-2.6 M1073.3 13.900000000000002l1.3-1.3 1.3 1.3" stroke-width="0.8"/>
 <!-- min / restore / close -->
 <path d="M1106.8 12.4h7.8"/>
 <path d="M1142.5 11.1h6v5.6h-6z M1144.2 11v-1.6h6.2v5.6h-1.8" />
 <path d="M1178.1 9.4l7.6 7.6 M1185.7 9.4l-7.6 7.6"/>
</svg>
<span class="t m" style="left:319.4px;top:6.9px;font-size:7.2px;color:#fff;transform:scaleX(.84);">abc</span>

<!-- tabs row -->
<div class="abs" style="left:289.3px;top:47.2px;width:64px;height:2.2px;background:#2b579a;"></div>
<div class="abs" style="left:1124.5px;top:30.3px;width:65.5px;height:17px;background:#fff;border-radius:2.5px;box-shadow:0 0 0 0.6px #e3e1df;"></div>
<svg style="left:1128px;top:32px;" width="14" height="14" viewBox="1128 32 14 14" fill="none" stroke="#2b579a" stroke-width="0.9" stroke-linejoin="round" stroke-linecap="round">
 <path d="M1132.3 37.2h-1.8v5.4h7.2v-2.4 M1132.6 40.4c0.2-2.4 1.4-3.6 3.4-3.7v-1.9l2.6 2.7-2.6 2.7v-1.9c-1.5 0-2.600000000000003 0.6-3.4 2.1z"/>
</svg>

<!-- ribbon: separators -->
<div class="sep" style="left:279px;"></div>
<div class="sep" style="left:519px;"></div>
<div class="sep" style="left:789px;"></div>

<!-- numeros button highlight -->
<div class="abs" style="left:164.2px;top:71px;width:108.6px;height:17.4px;background:#cfcdcb;box-sizing:border-box;border:1px solid #adaba9;"></div>

<!-- inputs -->
<div class="inp" style="left:350.4px;top:72.4px;width:56px;height:18.1px;"></div>
<div class="inp" style="left:350.4px;top:91.8px;width:52px;height:17.4px;"></div>
<div class="inp" style="left:456.4px;top:72.4px;width:56.2px;height:18.1px;"></div>
<div class="inp" style="left:456.4px;top:91.8px;width:56.2px;height:17.4px;"></div>

<svg style="left:0;top:52px;" width="1200" height="76" viewBox="0 52 1200 76" fill="none" stroke-linecap="butt" stroke-linejoin="miter">
 <!-- Marges -->
 <rect x="14.5" y="57" width="17" height="21" rx="0.8" fill="#fafafa" stroke="#7a7a7a" stroke-width="1.1"/>
 <path d="M18 57.6v20 M27.5 57.6v20 M15 60.7h16 M15 74.5h16" stroke="#3a96dd" stroke-width="1"/>
 <!-- Orientation -->
 <path d="M54.5 56.8h7l4.5 4.5v12.2h-11.5z" fill="#fafafa" stroke="#7a7a7a" stroke-width="1"/>
 <path d="M61.5 56.8v4.5h4.5" stroke="#7a7a7a" stroke-width="1"/>
 <path d="M59.4 66.2h11.600000000000001l4.6 4.6v6.5h-16.2z" fill="#fafafa" stroke="#7a7a7a" stroke-width="1"/>
 <path d="M71 66.2v4.6h4.6" stroke="#7a7a7a" stroke-width="1"/>
 <!-- Taille -->
 <path d="M99.5 60.8h7.4l5.4 5.4v11.6h-12.8z" fill="#fafafa" stroke="#6a6a6a" stroke-width="1.1" stroke-linejoin="round"/>
 <path d="M106.9 60.8v5.4h5.4" stroke="#6a6a6a" stroke-width="1"/>
 <path d="M99.3 57.7h13.4 M99.3 56.2v3 M112.7 56.2v3 M96.3 60.5v17.6 M94.9 60.5h2.8 M94.9 78.1h2.8" stroke="#3a96dd" stroke-width="1"/>
 <!-- Colonnes -->
 <rect x="134.8" y="57" width="16.6" height="21" rx="0.8" fill="#fafafa" stroke="#7a7a7a" stroke-width="1.1"/>
 <path d="M137.3 62.5h5 M144 62.5h5 M137.3 65.6h5 M144 65.6h5 M137.3 68.7h5 M144 68.7h5 M137.3 71.8h5 M144 71.8h5" stroke="#3a96dd" stroke-width="1.1"/>
 <!-- chevrons big buttons -->
 <g stroke="#444" stroke-width="1.05"><path d="M20.4 98.7l2.100000000000005 2 2.1-2"/><path d="M62.3 98.7l2.1 2 2.1-2"/><path d="M104.1 98.7l2.1 2 2.1-2"/><path d="M140.9 98.7l2.1 2 2.1-2"/></g>
 <!-- Sauts de page icon -->
 <path d="M168 55.3v3h9v-3 M168 66.3v-3h9v3" stroke="#555" stroke-width="1"/>
 <path d="M166 60.8h12" stroke="#3a96dd" stroke-width="1" stroke-dasharray="1.6 0.8"/>
 <path d="M243.4 60.4l1.6 1.6 1.6-1.6" stroke="#444" stroke-width="1.1"/>
 <!-- Numeros icon -->
 <path d="M174.3 75.7h2 M174.3 82.3h2" stroke="#555" stroke-width="1"/>
 <path d="M262.2 78.4l1.6 1.6 1.6-1.6" stroke="#444" stroke-width="1.1"/>
 <!-- indent icon -->
 <path d="M288.9 76.2h10.9 M295.3 78.6h4.5 M295.3 80.9h4.5 M295.3 83.2h4.5 M288.9 85.5h10.9" stroke="#6a6a6a" stroke-width="0.8"/>
 <path d="M288.9 80.9h4.2 M291.6 79.2l1.7 1.7-1.7 1.7" stroke="#2b8fd9" stroke-width="1"/>
 <!-- spacing icons -->
 <g stroke="#777" stroke-width="0.75"><path d="M415.7 75.5h6.3 M415.7 77.6h6.3 M415.7 79.7h6.3 M415.7 82.6h6.3 M415.7 84.7h6.3 M415.7 86.8h6.3"/>
 <path d="M415.7 94.6h6.3 M415.7 96.7h6.3 M415.7 98.8h6.3 M415.7 101.2h6.3 M415.7 103.3h6.3 M415.7 105.4h6.3"/></g>
 <g stroke="#2b8fd9" stroke-width="1"><path d="M411.3 76.4v4 M409.5 78.2l1.8-1.8 1.8 1.8 M411.3 82.4v4 M409.5 84.6l1.8 1.8 1.8-1.8"/>
 <path d="M411.3 94.4v4 M409.5 96.6l1.8 1.8 1.8-1.8 M411.3 101.4v4 M409.5 103.2l1.8-1.8 1.8 1.8"/></g>
 <!-- spinners -->
 <g stroke="#555" stroke-width="0.9"><path d="M397.8 78.2l1.8-1.8 1.8 1.8 M397.8 85l1.8 1.8 1.8-1.8"/>
 <path d="M394 97.2l1.8-1.8 1.8 1.8 M394 103.8l1.8 1.8 1.8-1.8"/>
 <path d="M503.8 78.2l1.8-1.8 1.8 1.8 M503.8 85l1.8 1.8 1.8-1.8"/>
 <path d="M503.8 97.2l1.8-1.8 1.8 1.8 M503.8 103.8l1.8 1.8 1.8-1.8"/></g>
 <!-- dialog launcher -->
 <path d="M510.4 121.2v-4.6h4.6 M512.6 118.8l3.2 3.2 M516 119.6v2.6h-2.6" stroke="#666" stroke-width="0.8"/>
 <!-- Position -->
 <rect x="534.9" y="57.1" width="16.4" height="20.8" rx="0.8" fill="#f8f8f8" stroke="#bcbcbc" stroke-width="1.3"/>
 <rect x="541.2" y="59.3" width="7.4" height="5.2" fill="#e0e0e0" stroke="#a6a6a6" stroke-width="0.9"/>
 <path d="M537.7 67.2h11.1 M537.7 70.2h11.1 M537.7 73.3h11.1 M537.7 60.5h1.6 M537.7 63.8h1.6" stroke="#cfcfcf" stroke-width="1"/>
 <!-- Habillage -->
 <path d="M572 59.3h22 M572 63.1h7 M587 63.1h7 M572 67.2h4 M590 67.2h4 M572 71.2h4 M590 71.2h4 M572 75h22" stroke="#d0d0d0" stroke-width="1.1"/>
 <path d="M578.7 71.7v-2.4a4.3 4.3 0 0 1 8.6 0v2.4" stroke="#8c8c8c" stroke-width="3.3"/>
 <!-- Avancer -->
 <rect x="621.5" y="65.7" width="11.8" height="12.3" fill="#efefef" stroke="#bdbdbd" stroke-width="1"/>
 <rect x="612.7" y="57" width="14.6" height="14.3" fill="#d9d9d9" stroke="#c6c6c6" stroke-width="1"/>
 <!-- Reculer -->
 <rect x="647.7" y="57" width="14.5" height="14.3" fill="#d9d9d9" stroke="#c6c6c6" stroke-width="1"/>
 <rect x="655.6" y="64.8" width="13.8" height="14.1" fill="#f3f2f1" stroke="none"/>
 <rect x="656.5" y="65.7" width="12" height="12.3" fill="#efefef" stroke="#b4b4b4" stroke-width="1"/>
 <!-- disabled chevrons -->
 <g stroke="#b8b6b4" stroke-width="0.9"><path d="M540.8 98.7l2.1 2 2.1-2"/><path d="M580.7 98.7l2.1 2 2.1-2"/><path d="M620.9 98.7l2.1 2 2.1-2"/><path d="M655.8 98.7l2.1 2 2.1-2"/>
  <path d="M770.9 78.2l1.8 1.8 1.8-1.8"/><path d="M772.7 96.6l1.8 1.8 1.8-1.8"/></g>
 <!-- Volet selection -->
 <rect x="692.9" y="56.9" width="13.4" height="14.4" rx="0.4" fill="#f9dc93" stroke="#f0a22e" stroke-width="1.3"/>
 <rect x="685" y="67.2" width="13.8" height="11" fill="#fff" stroke="#6a6a6a" stroke-width="1"/>
 <path d="M698.4 65.6v11.6l2.6-2.4 1.8 4 1.6-0.8-1.8-3.8h3.8z" fill="#fff" stroke="#444" stroke-width="0.9" stroke-linejoin="round"/>
 <!-- Aligner -->
 <path d="M719.3 55.2v12.4" stroke="#555" stroke-width="1"/>
 <rect x="719.3" y="55.9" width="6.2" height="2.8" fill="#f3f2f1" stroke="#555" stroke-width="0.9"/>
 <rect x="719.3" y="59.8" width="11.4" height="3.1" fill="#fff" stroke="#555" stroke-width="0.9"/>
 <path d="M721 65.6h4.8 M722.6 64l-1.6 1.6 1.6 1.6" stroke="#2b8fd9" stroke-width="0.9"/>
 <path d="M767.1 60l1.8 1.8 1.8-1.8" stroke="#444" stroke-width="0.9"/>
 <!-- Grouper -->
 <g stroke="#b4b2b0" stroke-width="0.9"><rect x="720.4" y="74.7" width="6.8" height="6.8"/><rect x="723.5" y="77.4" width="6.6" height="6.6"/></g>
 <g fill="#b4b2b0"><rect x="718.8" y="73" width="1.2" height="1.2"/><rect x="730.2" y="73" width="1.2" height="1.2"/><rect x="718.8" y="84.2" width="1.2" height="1.2"/><rect x="730.2" y="84.2" width="1.2" height="1.2"/></g>
 <!-- Rotation -->
 <g stroke="#b4b2b0" stroke-width="0.9"><path d="M719.9 101.5h10.8v-5.7z"/><path d="M720.6 96.4c-0.4-1.9 1-3.4 2.800000000000004-3.4h1.8 M723.9 91.4l1.6 1.6-1.6 1.6"/></g>
 <!-- collapse ribbon -->
 <path d="M1185.4 121.6l3.8-3.7 3.8 3.7" stroke="#555" stroke-width="1"/>
</svg>
<span class="t m" style="left:168.6px;top:73.3px;font-size:6.6px;color:#2b8fd9;font-weight:700;">1</span>
<span class="t m" style="left:168.6px;top:79.4px;font-size:6.6px;color:#2b8fd9;font-weight:700;">2</span>

<span class="t" style="left:16.3px;top:7.8px;font-size:10.6px;color:#fff;transform:scaleX(0.884);">Enregistrement automatique</span>
<span class="t" style="left:389.5px;top:7.8px;font-size:10.6px;color:#fff;transform:scaleX(0.859);">Exercice 16 résolu.docx  -  Word</span>
<span class="t" style="left:572.2px;top:8.0px;font-size:10.6px;color:#1f3864;transform:scaleX(0.824);">Rechercher</span>
<span class="t" style="left:972.3px;top:7.8px;font-size:10.6px;color:#fff;transform:scaleX(0.889);">Formettic H</span>
<span class="t" style="left:1033.5px;top:9.9px;font-size:7.4px;color:#fff;transform:scaleX(1.065);">FH</span>
<span class="t" style="left:1143.3px;top:34.1px;font-size:9.8px;color:#2b579a;font-weight:700;transform:scaleX(1.006);">Partager</span>
<span class="t" style="left:10.0px;top:33.4px;font-size:10.5px;color:#444;transform:scaleX(0.974);">Fichier</span>
<span class="t" style="left:60.0px;top:33.4px;font-size:10.5px;color:#444;transform:scaleX(0.983);">Accueil</span>
<span class="t" style="left:110.7px;top:33.4px;font-size:10.5px;color:#444;transform:scaleX(1.033);">Insertion</span>
<span class="t" style="left:169.3px;top:33.4px;font-size:10.5px;color:#444;transform:scaleX(0.956);">Dessin</span>
<span class="t" style="left:216.7px;top:33.4px;font-size:10.5px;color:#444;transform:scaleX(1.035);">Conception</span>
<span class="t" style="left:370.7px;top:33.4px;font-size:10.5px;color:#444;transform:scaleX(0.950);">Références</span>
<span class="t" style="left:439.3px;top:33.4px;font-size:10.5px;color:#444;transform:scaleX(1.016);">Publipostage</span>
<span class="t" style="left:519.0px;top:33.4px;font-size:10.5px;color:#444;transform:scaleX(0.951);">Révision</span>
<span class="t" style="left:575.7px;top:33.4px;font-size:10.5px;color:#444;">Affichage</span>
<span class="t" style="left:637.7px;top:33.4px;font-size:10.5px;color:#444;transform:scaleX(0.980);">Aide</span>
<span class="t" style="left:289.3px;top:33.4px;font-size:10.5px;color:#262626;font-weight:700;transform:scaleX(0.970);">Mise en page</span>
<span class="t" style="left:7.8px;top:83.3px;font-size:9.8px;color:#444;transform:scaleX(0.924);">Marges</span>
<span class="t" style="left:41.5px;top:83.3px;font-size:9.8px;color:#444;transform:scaleX(0.970);">Orientation</span>
<span class="t" style="left:96.0px;top:83.3px;font-size:9.8px;color:#444;transform:scaleX(0.941);">Taille</span>
<span class="t" style="left:123.5px;top:83.3px;font-size:9.8px;color:#444;transform:scaleX(0.930);">Colonnes</span>
<span class="t" style="left:107.6px;top:115.0px;font-size:8.7px;color:#444;transform:scaleX(0.947);">Mise en page</span>
<span class="t" style="left:181.5px;top:57.3px;font-size:9.8px;color:#444;transform:scaleX(0.919);">Sauts de page</span>
<span class="t" style="left:181.5px;top:75.3px;font-size:9.8px;color:#444;transform:scaleX(0.943);">Numéros de lignes</span>
<span class="t" style="left:285.8px;top:58.3px;font-size:9.8px;color:#444;transform:scaleX(0.943);">Retrait</span>
<span class="t" style="left:407.3px;top:58.3px;font-size:9.8px;color:#444;transform:scaleX(0.907);">Espacement</span>
<span class="t" style="left:303.0px;top:77.0px;font-size:9.8px;color:#444;transform:scaleX(0.918);">À gauche :</span>
<span class="t" style="left:352.0px;top:77.0px;font-size:9.8px;color:#262626;transform:scaleX(0.937);">0 cm</span>
<span class="t" style="left:352.0px;top:95.7px;font-size:9.8px;color:#262626;transform:scaleX(0.937);">0 cm</span>
<span class="t" style="left:425.0px;top:77.0px;font-size:9.8px;color:#444;transform:scaleX(0.907);">Avant :</span>
<span class="t" style="left:425.0px;top:95.7px;font-size:9.8px;color:#444;transform:scaleX(0.886);">Après :</span>
<span class="t" style="left:458.0px;top:77.0px;font-size:9.8px;color:#262626;transform:scaleX(0.979);">0 pt</span>
<span class="t" style="left:458.0px;top:95.7px;font-size:9.8px;color:#262626;transform:scaleX(0.979);">0 pt</span>
<span class="t" style="left:371.3px;top:115.0px;font-size:8.7px;color:#444;transform:scaleX(0.929);">Paragraphe</span>
<span class="t" style="left:527.3px;top:83.3px;font-size:9.8px;color:#b1afad;transform:scaleX(0.921);">Position</span>
<span class="t" style="left:563.0px;top:83.3px;font-size:9.8px;color:#b1afad;transform:scaleX(0.977);">Habillage</span>
<span class="t" style="left:607.2px;top:83.3px;font-size:9.8px;color:#b1afad;transform:scaleX(0.895);">Avancer</span>
<span class="t" style="left:643.3px;top:83.3px;font-size:9.8px;color:#b1afad;transform:scaleX(0.880);">Reculer</span>
<span class="t" style="left:685.0px;top:83.3px;font-size:9.8px;color:#262626;transform:scaleX(0.950);">Volet</span>
<span class="t" style="left:676.5px;top:95.9px;font-size:9.8px;color:#262626;transform:scaleX(0.930);">Sélection</span>
<span class="t" style="left:734.0px;top:56.7px;font-size:9.8px;color:#262626;transform:scaleX(0.957);">Aligner</span>
<span class="t" style="left:734.0px;top:75.0px;font-size:9.8px;color:#b1afad;transform:scaleX(0.918);">Grouper</span>
<span class="t" style="left:734.0px;top:93.5px;font-size:9.8px;color:#b1afad;transform:scaleX(0.959);">Rotation</span>
<span class="t" style="left:635.7px;top:115.0px;font-size:8.7px;color:#444;transform:scaleX(0.946);">Organiser</span>
<div class="abs" id="menu"></div>
<div class="abs" style="left:190.2px;top:203.3px;width:174.3px;height:1px;background:#e1dfdd;"></div>
<svg style="left:170px;top:160px;" width="20" height="16" viewBox="170 160 20 16" fill="none" stroke="#3a3a3a" stroke-width="1.4"><path d="M176.7 167.3l2.3 2.5 4-5.3"/></svg>

<span class="t" style="left:193.2px;top:96.1px;font-size:9.7px;color:#262626;transform:scaleX(0.928);"><u>A</u>ucun</span>
<span class="t" style="left:193.2px;top:118.7px;font-size:9.7px;color:#262626;transform:scaleX(0.952);"><u>C</u>ontinu</span>
<span class="t" style="left:193.2px;top:141.1px;font-size:9.7px;color:#262626;transform:scaleX(0.948);"><u>R</u>edémarrer chaque page</span>
<span class="t" style="left:193.2px;top:163.7px;font-size:9.7px;color:#262626;transform:scaleX(0.945);">Re<u>d</u>émarrer chaque section</span>
<span class="t" style="left:193.2px;top:186.0px;font-size:9.7px;color:#262626;transform:scaleX(0.970);"><u>S</u>upprimer pour le paragraphe actuel</span>
<span class="t" style="left:193.2px;top:210.6px;font-size:9.7px;color:#262626;transform:scaleX(0.967);">Options de numérotation de <u>l</u>igne...</span>
</body></html>
